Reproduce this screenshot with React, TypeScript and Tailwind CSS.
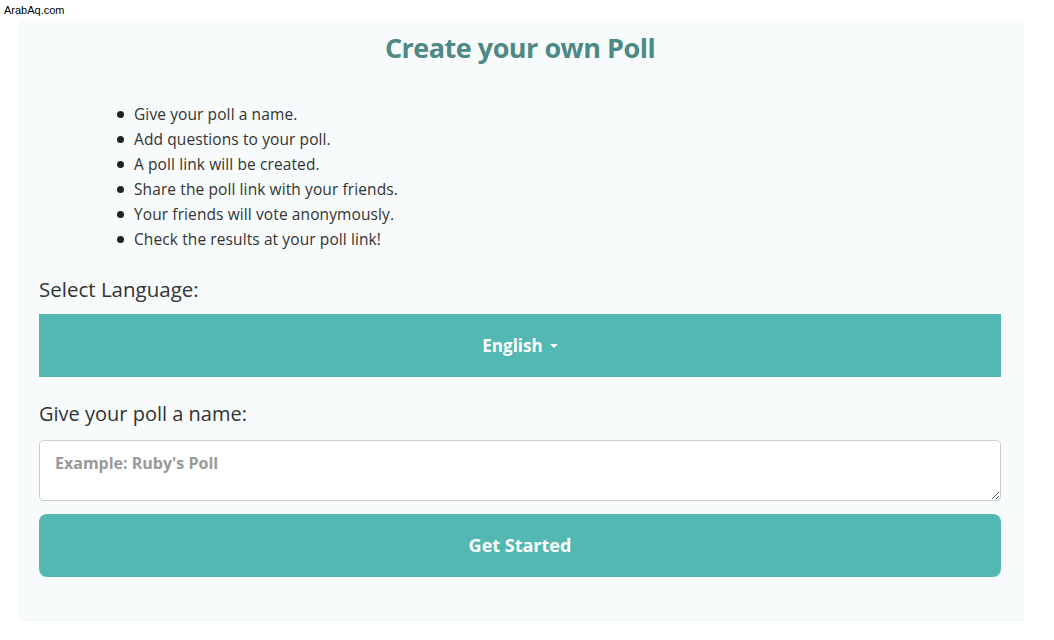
import React from "react";

const items = [
  "Give your poll a name.",
  "Add questions to your poll.",
  "A poll link will be created.",
  "Share the poll link with your friends.",
  "Your friends will vote anonymously.",
  "Check the results at your poll link!",
];

export default function App() {
  return (
    <div className="w-[1054px] h-[640px] bg-white relative" style={{ fontFamily: '"Open Sans", sans-serif' }}>
      <div className="absolute left-[4px] top-[3px] text-[11px] leading-[14px] text-black" style={{ fontFamily: '"Liberation Sans", Arial, sans-serif' }}>
        ArabAq.com
      </div>
      <div className="pt-[20px] pl-[19px]">
        <div className="w-[1005px] h-[602px] bg-[#f7fbfc] pl-[20px] pr-[23px] pt-[8px]">
          <h1 className="text-center text-[27px] leading-[40px] font-bold text-[#4e8985] tracking-[-0.5px]">
            Create your own Poll
          </h1>
          <ul className="mt-[34px] pl-[80px] text-[15.5px] leading-[25px] text-[#333] tracking-[0.1px]">
            {items.map((t) => (
              <li key={t} className="flex items-center">
                <span className="w-[7px] h-[7px] rounded-full bg-[#222] mr-[10px] -ml-[2px]" />
                {t}
              </li>
            ))}
          </ul>
          <div className="mt-[23px] text-[20.5px] leading-[28px] text-[#333]">Select Language:</div>
          <div className="mt-[11px] h-[63px] bg-[#52b8b1] flex items-center justify-center text-white font-bold text-[17px]">
            English
            <span className="ml-[7px] inline-block w-0 h-0 border-l-[4px] border-r-[4px] border-t-[4px] border-l-transparent border-r-transparent border-t-white" />
          </div>
          <div className="mt-[23px] text-[20px] leading-[28px] text-[#333]">Give your poll a name:</div>
          <textarea
            className="mt-[12px] block w-full h-[61px] bg-white border border-[#cfcfcf] rounded-[4px] px-[15px] pt-[10px] text-[16px] font-bold placeholder:text-[#999] outline-none"
            placeholder="Example: Ruby's Poll"
          />
          <button className="mt-[13px] w-full h-[63px] rounded-[8px] bg-[#52b8b1] text-white font-bold text-[18px]">
            Get Started
          </button>
        </div>
      </div>
    </div>
  );
}
